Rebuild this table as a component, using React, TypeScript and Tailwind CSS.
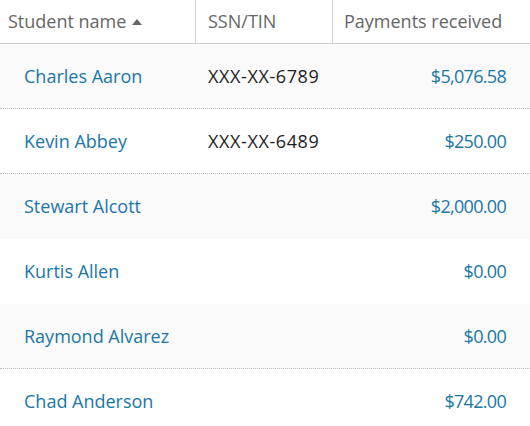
const rows = [
  { name: 'Charles Aaron', ssn: 'XXX-XX-6789', amount: '$5,076.58', shaded: true, dotted: true },
  { name: 'Kevin Abbey', ssn: 'XXX-XX-6489', amount: '$250.00', shaded: false, dotted: true },
  { name: 'Stewart Alcott', ssn: '', amount: '$2,000.00', shaded: true, dotted: false },
  { name: 'Kurtis Allen', ssn: '', amount: '$0.00', shaded: false, dotted: false },
  { name: 'Raymond Alvarez', ssn: '', amount: '$0.00', shaded: true, dotted: true },
  { name: 'Chad Anderson', ssn: '', amount: '$742.00', shaded: false, dotted: false },
]

export default function App() {
  return (
    <div className="w-[530px] h-[426px] overflow-hidden bg-white font-['Open_Sans',sans-serif]">
      {/* Header */}
      <div className="grid grid-cols-[196px_137px_1fr] h-[44px] border-b border-[#cfcfcf] text-[18px] text-[#666]">
        <div className="flex items-center pl-2 border-r border-[#d4d4d4]">
          Student name
          <svg width="10" height="6" viewBox="0 0 10 6" className="ml-[6px] mt-[1px]">
            <path d="M0 6 L5 0 L10 6 Z" fill="#666" />
          </svg>
        </div>
        <div className="flex items-center pl-3 border-r border-[#d4d4d4]">SSN/TIN</div>
        <div className="flex items-center pl-[11px]">Payments received</div>
      </div>

      {/* Rows */}
      {rows.map((r) => (
        <div
          key={r.name}
          className={`grid grid-cols-[196px_137px_1fr] h-[65px] border-b text-[18px] ${
            r.shaded ? 'bg-[#fafafa]' : 'bg-white'
          } ${r.dotted ? 'border-dotted border-[#bdbdbd]' : 'border-transparent'}`}
        >
          <div className="flex items-center pl-6 text-[#1a77a7]">{r.name}</div>
          <div className="flex items-center pl-3 text-[#1e1e1e] tracking-[0.6px]">{r.ssn}</div>
          <div className="flex items-center justify-end pr-6 tracking-[-0.7px] text-[#1a77a7]">
            {r.amount}
          </div>
        </div>
      ))}
    </div>
  )
}
